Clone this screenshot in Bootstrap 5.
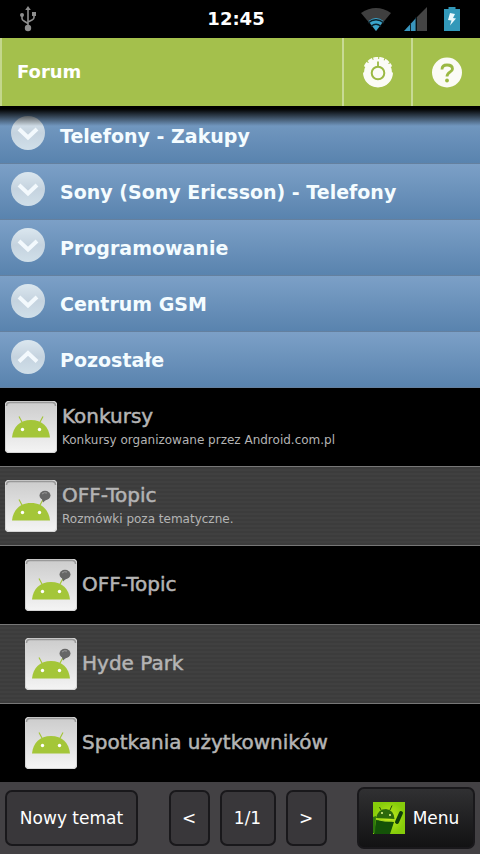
<!DOCTYPE html>
<html lang="pl">
<head>
<meta charset="utf-8">
<meta name="viewport" content="width=device-width, initial-scale=1">
<title>Forum</title>
<link href="https://cdn.jsdelivr.net/npm/bootstrap@5.3.0/dist/css/bootstrap.min.css" rel="stylesheet">
<style>
body { font-family: "DejaVu Sans", "Noto Sans", sans-serif; background: #000; color: #fff; }
svg { display: block; flex: none; }
.status { height: 38px; }
.usb { margin-left: 12px; }
.clock { font-size: 18px; line-height: 24px; font-weight: 700; }
.topbar { height: 68px; background: #a4c04c; border-left: 2px solid #c4d78c; }
.topbar h1 { font-size: 18px; line-height: 24px; padding-left: 15px; }
.tool { width: 69px; background: none; border: 0; border-left: 2px solid #c8da94; color: #fff; }
.sections { padding-top: 2px; }
.sections::before { content: ""; position: absolute; inset: 0 0 auto; height: 20px; background: linear-gradient(#000 15%, rgba(0,0,0,.6) 50%, transparent); }
.section-row { height: 56px; padding: 0 11px 6px; gap: 15px; border: 0; border-bottom: 1px solid #64809f; background: linear-gradient(#7ca0c7, #5983ae); color: #f4fcff; font-size: 19px; line-height: 28px; font-weight: 700; }
.section-row span { padding-top: 6px; }
.forum { min-height: 79px; padding: 0 5px; gap: 5px; background: #000; color: #b4b4b4; border-bottom: 1px solid #777; text-decoration: none; }
.forum:last-child { min-height: 78px; border: 0; }
.forum.sub { padding-left: 25px; }
.forum.alt { background: repeating-linear-gradient(#3c3c3c 0 2px, #404040 2px 4px); }
.title { font-size: 20px; line-height: 26px; -webkit-text-stroke: 0.5px; }
.desc { font-size: 12px; line-height: 22px; }
.forum.sub .title { padding-bottom: 2px; }
.bottombar { height: 72px; padding: 0 5px; background: #434144; }
.key { height: 56px; border: 2px solid #19181b; border-radius: 7px; background: #39373a; color: #fff; font-size: 17px; line-height: 24px; padding: 0; }
.key-new { width: 133px; }
.key-step { width: 41px; }
.key-page { width: 56px; }
.key-menu { width: 118px; height: 62px; gap: 8px; background: linear-gradient(#303032, #121213); }
.pager { gap: 10px; }
</style>
<script src="https://cdn.jsdelivr.net/npm/bootstrap@5.3.0/dist/js/bootstrap.bundle.min.js"></script>
</head>
<body>
<svg width="0" height="0" class="position-absolute" aria-hidden="true">
  <defs>
    <linearGradient id="disc" x2="0" y2="1"><stop stop-color="#dbe7ef"/><stop offset=".5" stop-color="#c5d3df"/><stop offset="1" stop-color="#d0dfe9"/></linearGradient>
    <linearGradient id="tileFill" x2="0" y2="1"><stop stop-color="#cccccc"/><stop offset="1" stop-color="#f4f4f4"/></linearGradient>
    <radialGradient id="lime"><stop stop-color="#c4ee20"/><stop offset="1" stop-color="#86cc0a"/></radialGradient>
    <symbol id="down" viewBox="0 0 34 34"><circle cx="17" cy="17" r="17" fill="url(#disc)"/><path d="M8 13L17 21.500L26 13" fill="none" stroke="#f3f9fd" stroke-width="4"/></symbol>
    <symbol id="up" viewBox="0 0 34 34"><circle cx="17" cy="17" r="17" fill="url(#disc)"/><path d="M8 21.500L17 13L26 21.500" fill="none" stroke="#f3f9fd" stroke-width="4"/></symbol>
    <symbol id="head" viewBox="0 0 40 24"><path d="M1 22.500C2 12 9 5 20 5S38 12 39 22.500Z" fill="#a4c639"/><path d="M8 1.500L12 9M32 1.500L28 9" stroke="#a4c639" stroke-width="1.200"/><circle cx="11.500" cy="14.500" r="1.700" fill="#fff"/><circle cx="28.500" cy="14.500" r="1.700" fill="#fff"/></symbol>
    <symbol id="tile" viewBox="0 0 52 52"><rect width="52" height="52" rx="4" fill="#eee"/><rect x=".5" y=".5" width="51" height="51" rx="3.500" fill="url(#tileFill)" stroke="#d5d5d5"/><path d="M1.500 5Q1.500 1.500 5 1.500H47Q50.500 1.500 50.500 5" fill="none" stroke="#999" stroke-width="1.500"/></symbol>
    <symbol id="plain" viewBox="0 0 52 52"><use href="#tile"/><use href="#head" x="6" y="14" width="40" height="24"/></symbol>
    <symbol id="talk" viewBox="0 0 52 52"><use href="#tile"/><use href="#head" x="6" y="18" width="40" height="24"/><path d="M37 19L38 22.500L42 19Z" fill="#666"/><ellipse cx="40" cy="15.500" rx="5.500" ry="4.700" fill="#666"/><path d="M37 14Q39 12 42 13" fill="none" stroke="#999"/></symbol>
  </defs>
</svg>
<div class="d-flex flex-column min-vh-100">
  <div class="status d-flex align-items-center pe-2">
    <div class="col d-flex ps-2">
      <svg class="usb" width="16" height="26" viewBox="0 0 16 26" fill="none" stroke="#8d8d8d" stroke-width="1.600"><path d="M8 3V21M2 10V12.500Q2 14 4 15L8 17.500M14 8.500V11.500Q14 13 12 14L8 16"/><g fill="#8d8d8d" stroke="none"><path d="M8 0L10.800 4H5.200Z"/><circle cx="8" cy="22" r="3.200"/><circle cx="2" cy="9" r="2"/><path d="M12 6H16V10H12Z"/></g></svg>
    </div>
    <div class="clock">12:45</div>
    <div class="col d-flex justify-content-end align-items-center pe-2">
      <svg width="32" height="24" viewBox="0 0 32 24"><path d="M1 6Q16-4 31 6L16 24Z" fill="#3f3f3f"/><path d="M8.500 14Q16 8 23.500 14L16 24Z" fill="#3aa5cc"/><path d="M8 16Q16 9.500 24 16M11 19.500Q16 15 21 19.500" fill="none" stroke="#0b222c" stroke-width="1.300"/></svg>
      <svg class="ms-2 me-3" width="28" height="24" viewBox="-3 0 28 24"><path d="M14 10L24 0V24H14Z" fill="#444"/><path d="M1 24L13 11V24Z" fill="#3995bd"/><path d="M7.500 16V24M13 10V24" stroke="#10242c"/></svg>
      <svg class="me-1" width="16" height="24" viewBox="0 0 16 24"><path d="M4.500 0H11.500V2H16V24H0V2H4.500Z" fill="#3298b9"/><path d="M6 6L11 7L9 11L12 11.500L6 18.500L7.500 13.500L4 13Z" fill="#eaf8fc"/></svg>
    </div>
  </div>
  <header class="topbar d-flex">
    <h1 class="fw-bold m-0 flex-grow-1 align-self-center">Forum</h1>
    <button type="button" class="tool d-flex align-items-center justify-content-center p-0" aria-label="Ustawienia">
      <svg width="30" height="31" viewBox="0 0 30 31"><circle cx="15" cy="16" r="14" fill="#fbfbf6"/><path d="M1.500 15.500A13.500 13.500 0 0 0 28.500 15.500" fill="none" stroke="#fbfbf6" stroke-width="3"/><path d="M2.500 10A13.500 13.500 0 0 1 27.500 10" fill="none" stroke="#fbfbf6" stroke-width="3.500" stroke-dasharray="4.700 1"/><circle cx="15" cy="16" r="6.300" fill="none" stroke="#9bb944" stroke-width="2"/><path d="M15 4.500V10" stroke="#9bb944" stroke-width="1.800"/></svg>
    </button>
    <button type="button" class="tool d-flex align-items-center justify-content-center p-0" aria-label="Pomoc">
      <svg width="30" height="31" viewBox="0 0 30 31"><circle cx="15" cy="15.500" r="15" fill="#fbfbf6"/><path d="M10 12.500Q10 8 15 8Q20.500 8 20.500 12C20.500 15 15 15 15 19.500" fill="none" stroke="#9ab843" stroke-width="2.800"/><circle cx="15" cy="23.500" r="1.900" fill="#9ab843"/></svg>
    </button>
  </header>
  <main class="flex-grow-1">
    <div class="sections position-relative">
      <button type="button" class="section-row d-flex align-items-center w-100 text-start"><svg width="34" height="34"><use href="#down"/></svg><span>Telefony - Zakupy</span></button>
      <button type="button" class="section-row d-flex align-items-center w-100 text-start"><svg width="34" height="34"><use href="#down"/></svg><span>Sony (Sony Ericsson) - Telefony</span></button>
      <button type="button" class="section-row d-flex align-items-center w-100 text-start"><svg width="34" height="34"><use href="#down"/></svg><span>Programowanie</span></button>
      <button type="button" class="section-row d-flex align-items-center w-100 text-start"><svg width="34" height="34"><use href="#down"/></svg><span>Centrum GSM</span></button>
      <button type="button" class="section-row d-flex align-items-center w-100 text-start" aria-expanded="true"><svg width="34" height="34"><use href="#up"/></svg><span>Pozostałe</span></button>
    </div>
    <nav aria-label="Pozostałe">
      <a href="#" class="forum d-flex align-items-center"><svg width="52" height="52"><use href="#plain"/></svg><div><div class="title">Konkursy</div><div class="desc">Konkursy organizowane przez Android.com.pl</div></div></a>
      <a href="#" class="forum alt d-flex align-items-center"><svg width="52" height="52"><use href="#talk"/></svg><div><div class="title">OFF-Topic</div><div class="desc">Rozmówki poza tematyczne.</div></div></a>
      <a href="#" class="forum sub d-flex align-items-center"><svg width="52" height="52"><use href="#talk"/></svg><div class="title">OFF-Topic</div></a>
      <a href="#" class="forum sub alt d-flex align-items-center"><svg width="52" height="52"><use href="#talk"/></svg><div class="title">Hyde Park</div></a>
      <a href="#" class="forum sub d-flex align-items-center"><svg width="52" height="52"><use href="#plain"/></svg><div class="title">Spotkania użytkowników</div></a>
    </nav>
  </main>
  <footer class="bottombar d-flex align-items-center justify-content-between">
    <button type="button" class="key key-new">Nowy temat</button>
    <div class="pager d-flex">
      <button type="button" class="key key-step" aria-label="Poprzednia">&lt;</button>
      <button type="button" class="key key-page">1/1</button>
      <button type="button" class="key key-step" aria-label="Następna">&gt;</button>
    </div>
    <button type="button" class="key key-menu d-flex align-items-center justify-content-center">
      <svg width="32" height="32" viewBox="0 0 32 32"><path d="M0 0H32V32H0Z" fill="url(#lime)"/><path d="M3 16Q5 7 13 7Q21 8 21.500 17Z" fill="#2c6a0c"/><path d="M3 18L21 20L17 32H1Z" fill="#145208"/><path d="M0 15L3 14L2 31H0Z" fill="#2c780c"/><path d="M8 8L6.500 5M17 8L19 3.500" stroke="#24500a"/><path d="M3 16.500Q12 21 21 18" fill="none" stroke="#a8d820"/><circle cx="9" cy="11" r="1" fill="#eaff90"/><circle cx="17" cy="13" r="1" fill="#eaff90"/><path d="M28 11L24 20" stroke="#123f0a" stroke-width="4" stroke-linecap="round"/></svg>
      <span>Menu</span>
    </button>
  </footer>
</div>
</body>
</html>
